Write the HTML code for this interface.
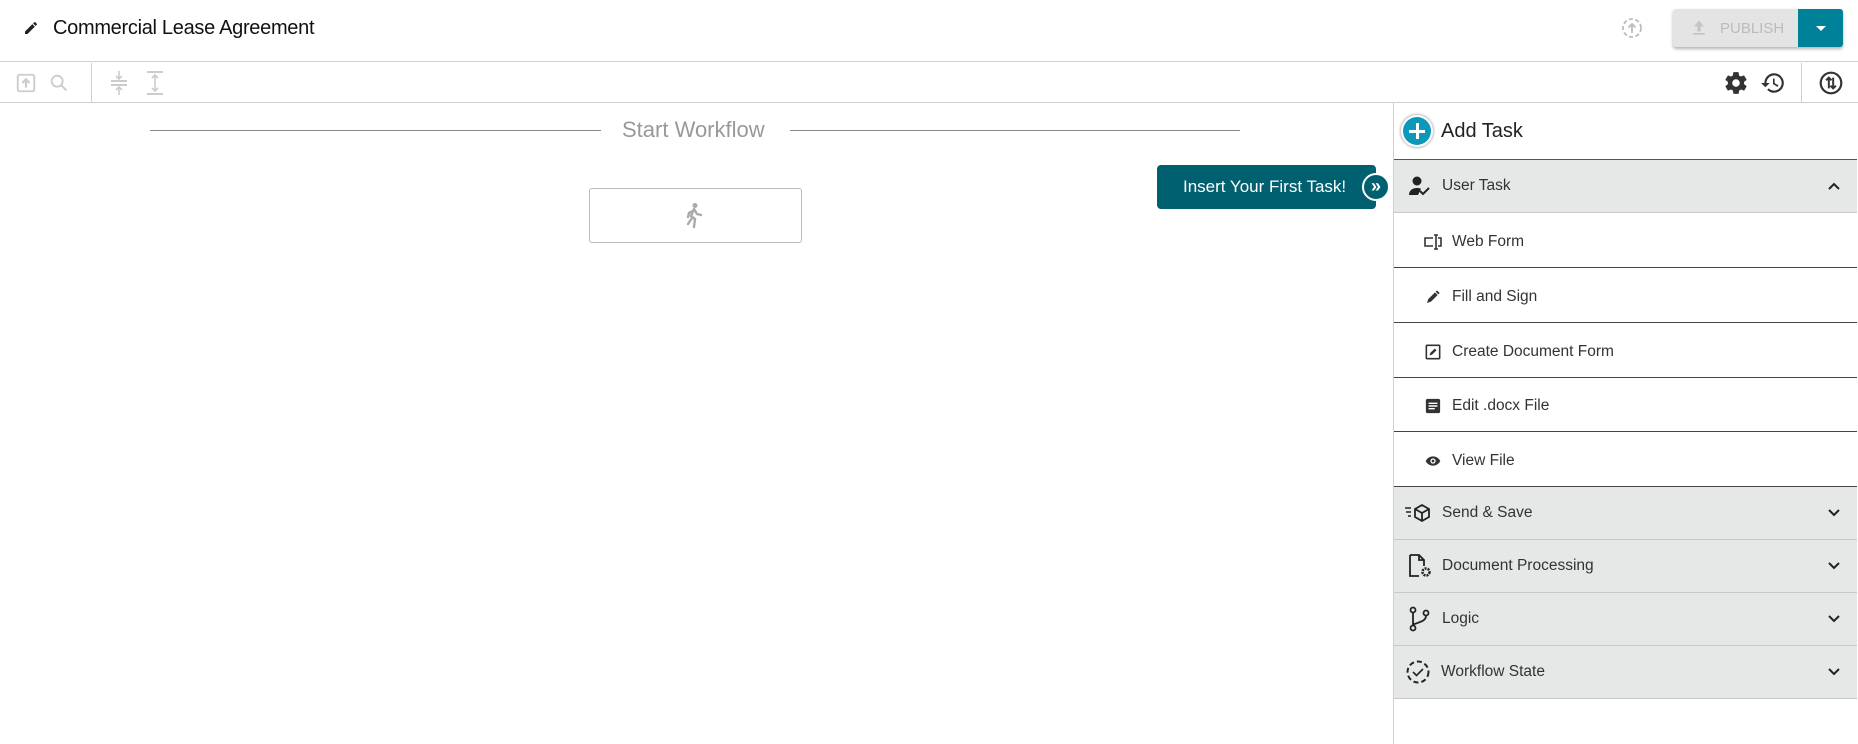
<!DOCTYPE html>
<html><head><meta charset="utf-8"><style>
*{box-sizing:border-box;margin:0;padding:0}
body{width:1858px;height:744px;background:#fff;font-family:"Liberation Sans",sans-serif;position:relative;overflow:hidden;color:#333}
.abs{position:absolute}
.hdr{left:0;top:0;width:1858px;height:62px;border-bottom:1px solid #cfcfcf}
.tb{left:0;top:62px;width:1858px;height:41px;border-bottom:1px solid #cfcfcf}
.panel{left:1393px;top:103px;width:465px;height:641px;border-left:1px solid #cfcfcf}
.row{position:absolute;left:0;width:463px;display:flex;align-items:center;font-size:15.5px;color:#333}
.cat{background:#e6e7e7;border-bottom:1px solid #c9c9c9}
.item{border-bottom:1.5px solid #444;padding-left:30px;padding-top:3px}
.item svg{margin-right:10px}
.cat svg.ic{margin-left:14px;margin-right:10px}
.chev{position:absolute;right:16px;top:50%;margin-top:-6px}
</style></head><body>
<div class="abs hdr"></div>
<svg class="abs" style="left:23px;top:20px" width="16" height="16" viewBox="0 0 24 24"><path d="M3 17.25V21h3.75L17.8 9.94l-3.75-3.75L3 17.25zM20.7 7.04a1 1 0 000-1.41l-2.34-2.34a1 1 0 00-1.41 0l-1.83 1.83 3.75 3.75 1.83-1.83z" fill="#222"/></svg>
<div class="abs" style="left:53px;top:17px;font-size:20px;color:#111;letter-spacing:-0.3px">Commercial Lease Agreement</div>
<svg class="abs" style="left:1620px;top:16px" width="24" height="24" viewBox="0 0 24 24"><circle cx="12" cy="12" r="9" fill="none" stroke="#bbb" stroke-width="1.8" stroke-dasharray="4 2.5"/><path d="M12 17V8M8.5 11.5L12 8l3.5 3.5" stroke="#bbb" stroke-width="1.8" fill="none"/></svg>
<div class="abs" style="left:1673px;top:9px;width:170px;height:38px;border-radius:3px;box-shadow:0 2px 3px rgba(0,0,0,.3);overflow:hidden;background:#e4e4e4">
<svg class="abs" style="left:16px;top:9px" width="20" height="20" viewBox="0 0 24 24"><path d="M5 20h14v-2H5zM12 3l-6 7h4v6h4v-6h4z" fill="#c4c4c4"/></svg>
<div class="abs" style="left:47px;top:11px;font-size:15px;color:#bbb">PUBLISH</div>
<div class="abs" style="left:125px;top:0;width:45px;height:38px;background:#00819a"><div style="position:absolute;left:18px;top:17px;border:5px solid transparent;border-top-color:#fff;border-bottom:0"></div></div>
</div>
<div class="abs tb"></div>
<svg class="abs" style="left:15px;top:72px" width="22" height="22" viewBox="0 0 24 24"><rect x="3" y="3" width="18" height="18" rx="2" fill="none" stroke="#ccc" stroke-width="2"/><path d="M12 17V9M8 12l4-4 4 4" stroke="#ccc" stroke-width="2.4" fill="none"/></svg>
<svg class="abs" style="left:48px;top:72px" width="22" height="22" viewBox="0 0 24 24"><circle cx="10" cy="10" r="6" fill="none" stroke="#ccc" stroke-width="2"/><path d="M14.5 14.5L20 20" stroke="#ccc" stroke-width="2.2"/></svg>
<div class="abs" style="left:91px;top:63px;width:1px;height:39px;background:#cfcfcf"></div>
<svg class="abs" style="left:108px;top:70px" width="22" height="26" viewBox="0 0 22 26"><path d="M3 11h16M3 15h16" stroke="#ccc" stroke-width="2"/><path d="M11 1v8M8 6l3 3 3-3M11 25v-8M8 20l3-3 3 3" stroke="#ccc" stroke-width="1.6" fill="none"/></svg>
<svg class="abs" style="left:144px;top:70px" width="22" height="26" viewBox="0 0 22 26"><path d="M3 2h16M3 24h16" stroke="#ccc" stroke-width="2"/><path d="M11 5v16M8 8l3-3 3 3M8 18l3 3 3-3" stroke="#ccc" stroke-width="1.6" fill="none"/></svg>
<svg class="abs" style="left:1723px;top:70px" width="26" height="26" viewBox="0 0 24 24"><path fill="#333" d="M19.4 13c.04-.33.06-.66.06-1s-.02-.67-.06-1l2.1-1.65a.5.5 0 00.12-.64l-2-3.46a.5.5 0 00-.6-.22l-2.5 1a7.3 7.3 0 00-1.7-1l-.38-2.65A.5.5 0 0014 2h-4a.5.5 0 00-.5.42l-.37 2.65c-.6.25-1.170.59-1.7 1l-2.5-1a.5.5 0 00-.6.22l-2 3.46a.5.5 0 00.12.64L4.57 11c-.04.33-.07.67-.07 1s.03.67.07 1l-2.1 1.65a.5.5 0 00-.12.64l2 3.46c.12.22.39.3.6.22l2.5-1c.52.4 1.08.74 1.7 1l.37 2.65c.04.24.25.42.5.42h4c.25 0 .46-.18.5-.42l.37-2.65c.6-.25 1.17-.59 1.7-1l2.5 1c.22.08.48 0 .6-.22l2-3.46a.5.5 0 00-.12-.64L19.4 13zM12 15.5a3.5 3.5 0 110-7 3.5 3.5 0 010 7z"/></svg>
<svg class="abs" style="left:1760px;top:70px" width="26" height="26" viewBox="0 0 24 24"><path fill="#333" d="M13 3a9 9 0 00-9 9H1l3.9 3.9L9 12H6a7 7 0 112.050 4.95l-1.42 1.42A9 9 0 1013 3zm-1 5v5l4.25 2.52.77-1.28-3.52-2.09V8z"/></svg>
<div class="abs" style="left:1801px;top:63px;width:1px;height:39px;background:#cfcfcf"></div>
<svg class="abs" style="left:1818px;top:70px" width="26" height="26" viewBox="0 0 24 24"><circle cx="12" cy="12" r="9.5" fill="none" stroke="#333" stroke-width="2"/><path d="M10 17V7M7.5 9.5L10 7l2.5 2.5M14 7v10M11.5 14.5L14 17l2.5-2.5" stroke="#333" stroke-width="1.8" fill="none"/></svg>

<div class="abs" style="left:150px;top:130px;width:451px;height:1px;background:#888"></div>
<div class="abs" style="left:622px;top:117px;font-size:22px;color:#999">Start Workflow</div>
<div class="abs" style="left:790px;top:130px;width:450px;height:1px;background:#888"></div>
<div class="abs" style="left:589px;top:188px;width:213px;height:55px;border:1px solid #bbb;border-radius:3px"></div>
<svg class="abs" style="left:683px;top:202px" width="22" height="28" viewBox="0 0 22 28"><circle cx="12" cy="3.5" r="2.5" fill="#aaa"/><path d="M11 7l-3 7 4 3-1 8M11 7l3 5 4 1M10 9l-4 2-1 4M9 16l-4 6" stroke="#aaa" stroke-width="2.4" fill="none" stroke-linecap="round"/></svg>

<div class="abs" style="left:1157px;top:165px;width:219px;height:44px;background:#00606f;border-radius:4px;color:#fff;font-size:17px;line-height:44px;padding-left:26px">Insert Your First Task!</div>
<div class="abs" style="left:1362px;top:173px;width:28px;height:28px;border-radius:50%;background:#00606f;border:2px solid #fff;color:#fff;font-size:18px;line-height:22px;text-align:center;font-weight:bold">»</div>

<div class="abs panel">
<div class="row" style="top:0;height:57px;border-bottom:1.5px solid #555">
<div style="margin-left:9px;width:28px;height:28px;border-radius:50%;background:#0b98b9;box-shadow:0 0 0 2px #fff,0 0 2px 3px #bbb;position:relative"><div style="position:absolute;left:6px;top:12.5px;width:16px;height:3px;background:#fff"></div><div style="position:absolute;left:12.5px;top:6px;width:3px;height:16px;background:#fff"></div></div>
<span style="margin-left:10px;font-size:20px;color:#222">Add Task</span></div>
<div class="row cat" style="top:57px;height:53px"><svg class="ic" width="24" height="22" viewBox="0 0 24 22"><circle cx="9" cy="6" r="4.5" fill="#222"/><path d="M1 20c0-5 4-7 8-7 2 0 3 .3 4 .8L10 20z" fill="#222"/><path d="M12 16l3 3 6-6" stroke="#222" stroke-width="2" fill="none"/></svg>User Task<svg class="chev" width="14" height="12" viewBox="0 0 14 12"><path d="M2 9l5-5 5 5" stroke="#222" stroke-width="2" fill="none"/></svg></div>
<div class="row item" style="top:110px;height:55px"><svg width="18" height="16" viewBox="0 0 18 16"><path d="M9 4H1v8h8M12 1v14M10 1h4M10 15h4M14 4h3v8h-3" stroke="#333" stroke-width="1.6" fill="none"/></svg>Web Form</div>
<div class="row item" style="top:165px;height:55px"><svg width="18" height="16" viewBox="0 0 24 24"><path d="M3 21l2-6 10-10 4 4-10 10zM16 4l2-2 4 4-2 2z" fill="#333"/></svg>Fill and Sign</div>
<div class="row item" style="top:220px;height:55px"><svg width="18" height="16" viewBox="0 0 18 18"><rect x="1.5" y="1.5" width="15" height="15" rx="1" fill="none" stroke="#333" stroke-width="1.8"/><path d="M5 13l1-3 5-5 2 2-5 5z" fill="#333"/></svg>Create Document Form</div>
<div class="row item" style="top:275px;height:54px"><svg width="18" height="16" viewBox="0 0 18 18"><rect x="1" y="1" width="16" height="16" rx="2" fill="#333"/><path d="M4 6h10M4 9h10M4 12h7" stroke="#fff" stroke-width="1.6"/></svg>Edit .docx File</div>
<div class="row item" style="top:329px;height:55px"><svg width="18" height="16" viewBox="0 0 24 24"><path d="M12 5C7 5 3 8 1 12c2 4 6 7 11 7s9-3 11-7c-2-4-6-7-11-7zm0 11a4 4 0 110-8 4 4 0 010 8zm0-6a2 2 0 100 4 2 2 0 000-4z" fill="#333"/></svg>View File</div>
<div class="row cat" style="top:384px;height:53px"><svg class="ic" style="margin-left:10px" width="28" height="20" viewBox="0 0 28 20"><path d="M1 5h6M2 9h5M4 13h3" stroke="#222" stroke-width="1.6"/><path d="M18 2l7 4v8l-7 4-7-4V6zM11 6l7 4 7-4M18 10v8" stroke="#222" stroke-width="1.8" fill="none"/></svg>Send &amp; Save<svg class="chev" width="14" height="12" viewBox="0 0 14 12"><path d="M2 3l5 5 5-5" stroke="#222" stroke-width="2" fill="none"/></svg></div>
<div class="row cat" style="top:437px;height:53px"><svg class="ic" width="24" height="26" viewBox="0 0 24 26"><path d="M2 2h9l5 5v6M11 2v5h5M2 2v21h9" stroke="#222" stroke-width="1.8" fill="none"/><circle cx="18" cy="19" r="3.5" fill="none" stroke="#222" stroke-width="2.5" stroke-dasharray="2 1"/></svg>Document Processing<svg class="chev" width="14" height="12" viewBox="0 0 14 12"><path d="M2 3l5 5 5-5" stroke="#222" stroke-width="2" fill="none"/></svg></div>
<div class="row cat" style="top:490px;height:53px"><svg class="ic" width="24" height="26" viewBox="0 0 24 26"><circle cx="5" cy="4" r="2.5" fill="none" stroke="#222" stroke-width="1.8"/><circle cx="5" cy="22" r="2.5" fill="none" stroke="#222" stroke-width="1.8"/><circle cx="18" cy="7" r="2.5" fill="none" stroke="#222" stroke-width="1.8"/><path d="M5 6.5v13M18 9.5c0 5-4 6-13 9" stroke="#222" stroke-width="1.8" fill="none"/></svg>Logic<svg class="chev" width="14" height="12" viewBox="0 0 14 12"><path d="M2 3l5 5 5-5" stroke="#222" stroke-width="2" fill="none"/></svg></div>
<div class="row cat" style="top:543px;height:53px"><svg class="ic" style="margin-left:11px" width="26" height="26" viewBox="0 0 26 26"><circle cx="13" cy="13" r="10.5" fill="none" stroke="#222" stroke-width="2" stroke-dasharray="5 3"/><path d="M8 13l3.5 3.5L18 10" stroke="#222" stroke-width="1.6" fill="none"/></svg>Workflow State<svg class="chev" width="14" height="12" viewBox="0 0 14 12"><path d="M2 3l5 5 5-5" stroke="#222" stroke-width="2" fill="none"/></svg></div>
</div>
</body></html>
